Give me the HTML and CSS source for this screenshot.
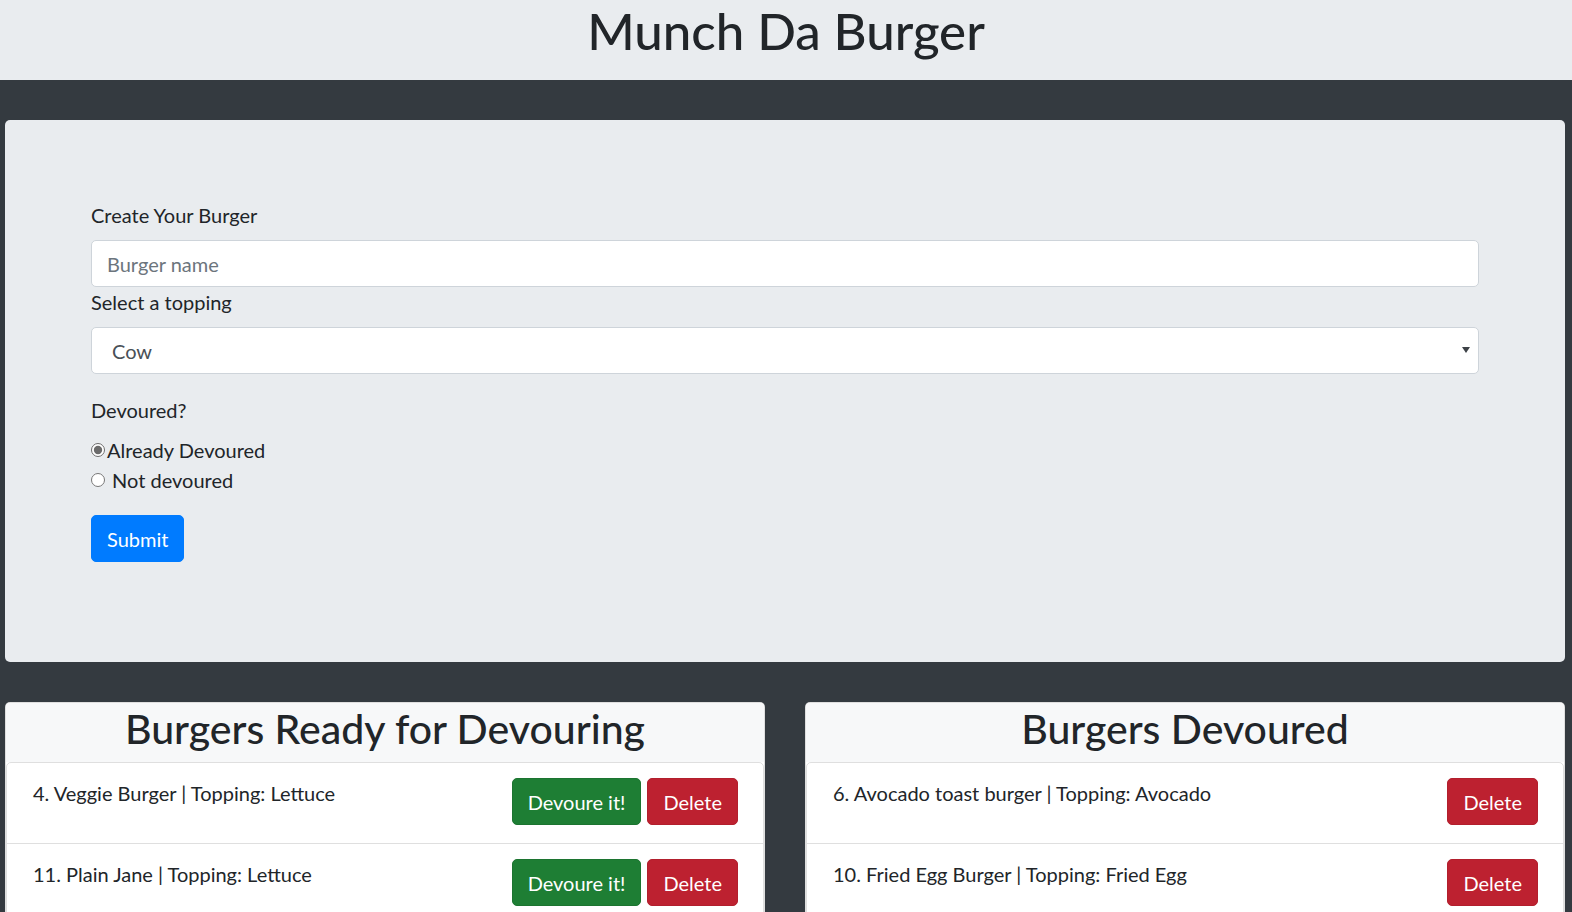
FILE: index.html
```html
<!DOCTYPE html>
<html lang="en">
<head>
<meta charset="utf-8">
<title>Munch Da Burger</title>
<link rel="stylesheet" href="styles.css">
</head>
<body>
<header class="site-header">
  <h1 class="site-title">Munch Da Burger</h1>
</header>
<main class="page">
  <section class="jumbotron">
    <form class="burger-form">
      <label class="field-label" for="burger-name">Create Your Burger</label>
      <input class="form-control" id="burger-name" type="text" placeholder="Burger name">
      <label class="field-label" for="topping">Select a topping</label>
      <div class="select-wrap">
        <select class="form-control form-select" id="topping">
          <option>Cow</option>
        </select>
        <span class="caret"></span>
      </div>
      <div class="field-label devoured-label">Devoured?</div>
      <label class="radio-row"><input type="radio" name="devoured" checked><span>Already Devoured</span></label>
      <label class="radio-row"><input type="radio" name="devoured"><span>&nbsp;Not devoured</span></label>
      <button type="button" class="btn btn-primary submit-btn">Submit</button>
    </form>
  </section>
  <section class="columns">
    <div class="card">
      <div class="card-header"><h2 class="card-title">Burgers Ready for Devouring</h2></div>
      <ul class="list-group">
        <li class="list-item">
          <span class="item-text">4. Veggie Burger | Topping: Lettuce</span>
          <span class="item-actions"><button class="btn btn-success">Devoure it!</button><button class="btn btn-danger">Delete</button></span>
        </li>
        <li class="list-item">
          <span class="item-text">11. Plain Jane | Topping: Lettuce</span>
          <span class="item-actions"><button class="btn btn-success">Devoure it!</button><button class="btn btn-danger">Delete</button></span>
        </li>
      </ul>
    </div>
    <div class="card">
      <div class="card-header"><h2 class="card-title">Burgers Devoured</h2></div>
      <ul class="list-group">
        <li class="list-item">
          <span class="item-text">6. Avocado toast burger | Topping: Avocado</span>
          <span class="item-actions"><button class="btn btn-danger">Delete</button></span>
        </li>
        <li class="list-item">
          <span class="item-text">10. Fried Egg Burger | Topping: Fried Egg</span>
          <span class="item-actions"><button class="btn btn-danger">Delete</button></span>
        </li>
      </ul>
    </div>
  </section>
</main>
</body>
</html>
```
FILE: styles.css
```css
* { box-sizing: border-box; }
html, body { margin: 0; padding: 0; }
body {
  background: #343a40;
  color: #212529;
  font-family: "Lato", "Open Sans", "Liberation Sans", sans-serif;
  font-size: 20px;
  line-height: 1.5;
  overflow: hidden;
  height: 912px;
}
.site-header {
  background: #e9ecef;
  height: 80px;
  display: flex;
  justify-content: center;
}
.site-title {
  margin: 0;
  font-size: 51px;
  font-weight: 500;
  line-height: 62px;
}
.page {
  padding: 40px 7px 0 5px;
}
.jumbotron {
  background: #e9ecef;
  border-radius: 5px;
  height: 542px;
  padding: 80px 86px 0 86px;
}
.burger-form {
  display: flex;
  flex-direction: column;
  align-items: flex-start;
}
.field-label {
  display: block;
  margin-bottom: 10px;
  line-height: 30px;
}
.devoured-label { margin-top: 21px; }
.form-control {
  display: block;
  width: 100%;
  height: 47px;
  padding: 7px 15px;
  font: inherit;
  font-size: 20px;
  color: #495057;
  background: #fff;
  border: 1px solid #ced4da;
  border-radius: 5px;
  margin: 0;
}
.form-control::placeholder { color: #6c757d; }
.select-wrap {
  position: relative;
  width: 100%;
}
.form-select {
  appearance: none;
  -webkit-appearance: none;
  padding-left: 20px;
}
.caret {
  position: absolute;
  right: 9px;
  top: 20px;
  width: 0;
  height: 0;
  border-left: 4px solid transparent;
  border-right: 4px solid transparent;
  border-top: 6px solid #3d4247;
}
.radio-row {
  display: flex;
  align-items: center;
  line-height: 30px;
  height: 30px;
}
.radio-row input {
  width: 14px;
  height: 14px;
  margin: 0 2px 0 0;
  accent-color: #6b6b6b;
}
.btn {
  display: inline-block;
  font: inherit;
  font-size: 20px;
  line-height: 30px;
  padding: 7.5px 15px;
  border: 1px solid transparent;
  border-radius: 5px;
  color: #fff;
  cursor: pointer;
}
.btn-primary { background: #007bff; border-color: #007bff; }
.btn-success { background: #1e7e34; border-color: #1c7430; }
.btn-danger { background: #bd2130; border-color: #b21f2d; }
.submit-btn { margin-top: 20px; }
.columns {
  display: grid;
  grid-template-columns: 1fr 1fr;
  column-gap: 40px;
  margin-top: 40px;
}
.card {
  background: #fff;
  border: 1px solid rgba(0,0,0,.125);
  border-radius: 5px;
  overflow: hidden;
  height: 260px;
}
.card-header {
  background: #f7f8f9;
  height: 59px;
  display: flex;
  justify-content: center;
  align-items: center;
}
.card-title {
  margin: 0;
  font-size: 41px;
  font-weight: 500;
  line-height: 48px;
  padding-bottom: 8px;
}
.list-group {
  list-style: none;
  margin: 0;
  padding: 0;
  border: 1px solid rgba(0,0,0,.125);
  border-radius: 5px;
}
.list-item {
  display: flex;
  justify-content: space-between;
  align-items: flex-start;
  padding: 15px 25px 18px 26px;
  border-bottom: 1px solid rgba(0,0,0,.125);
}
.item-text { line-height: 30px; }
.item-actions {
  display: flex;
  gap: 6px;
}
```
